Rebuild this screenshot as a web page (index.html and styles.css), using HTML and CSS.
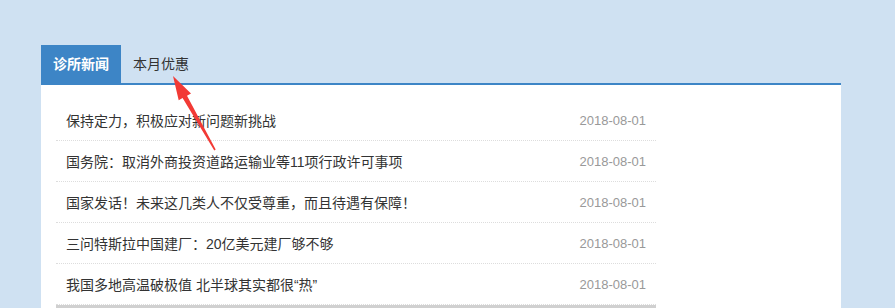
FILE: index.html
```html
<!DOCTYPE html>
<html>
<head>
    <meta charset="utf-8">
    <title>诊所新闻</title>
    <link rel="stylesheet" href="styles.css">
</head>
<body>
    <div class="news-box">
        <div class="tabs">
            <a class="tab active" href="#">诊所新闻</a>
            <a class="tab" href="#">本月优惠</a>
        </div>
        <div class="panel">
            <ul class="news-list">
                <li><a href="#">保持定力，积极应对新问题新挑战</a><span class="date">2018-08-01</span></li>
                <li><a href="#">国务院：取消外商投资道路运输业等11项行政许可事项</a><span class="date">2018-08-01</span></li>
                <li><a href="#">国家发话！未来这几类人不仅受尊重，而且待遇有保障！</a><span class="date">2018-08-01</span></li>
                <li><a href="#">三问特斯拉中国建厂：20亿美元建厂够不够</a><span class="date">2018-08-01</span></li>
                <li><a href="#">我国多地高温破极值 北半球其实都很“热”</a><span class="date">2018-08-01</span></li>
            </ul>
            <div class="list-foot"></div>
        </div>

        <!-- annotation arrow -->
        <svg class="arrow" width="80" height="90" viewBox="0 0 80 90">
            <path d="M12 1 L30 18.5 L26 20.7 L54.7 74.6 L53.3 75.4 L21.6 23.1 L17.7 25.3 Z" fill="#f23a35"/>
        </svg>
    </div>
</body>
</html>
```

FILE: styles.css
```css
body {
    margin: 0;
    background: #cfe1f2;
    font-family: "Liberation Sans", "Noto Sans CJK SC", sans-serif;
    font-size: 14px;
    color: #333;
}
.news-box {
    position: relative;
    width: 800px;
    margin: 45px 0 0 41px;
}
.tabs {
    display: flex;
    height: 38px;
    border-bottom: 2px solid #3d85c6;
}
.tab {
    display: block;
    padding: 0 12px;
    line-height: 38px;
    color: #333;
    text-decoration: none;
}
.tab.active {
    background: #3d85c6;
    color: #fff;
    font-weight: bold;
}
.panel {
    background: #fff;
    padding: 15px 15px 0;
    height: 208px;
}
.news-list {
    list-style: none;
    margin: 0;
    padding: 0;
    width: 600px;
}
.news-list li {
    display: flex;
    justify-content: space-between;
    align-items: center;
    height: 40px;
    padding: 0 10px;
    border-bottom: 1px dotted #ddd;
}
.news-list a {
    color: #333;
    text-decoration: none;
}
.date {
    color: #999;
    font-size: 13px;
}
.list-foot {
    width: 600px;
    height: 3px;
    background: #d0d0d0;
}
.arrow {
    position: absolute;
    left: 120px;
    top: 30px;
}
```
